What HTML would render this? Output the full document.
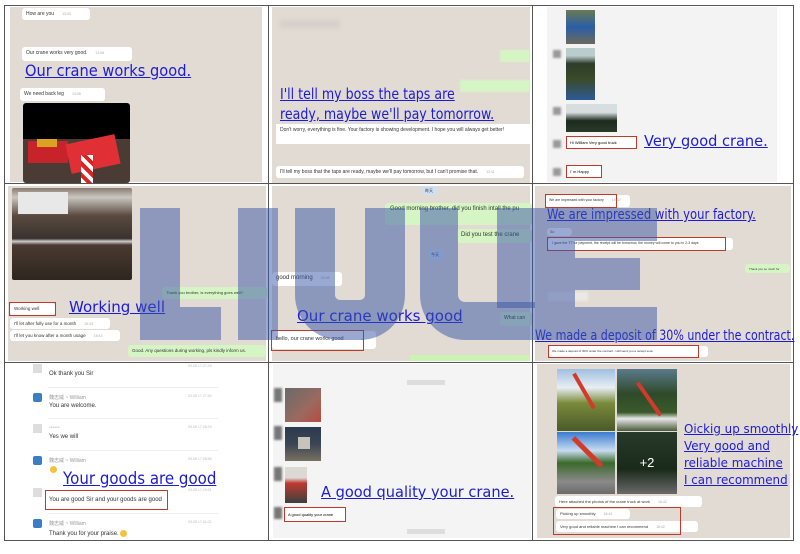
<!DOCTYPE html>
<html><head><meta charset="utf-8"><style>
*{margin:0;padding:0;box-sizing:border-box}
body{width:800px;height:554px;background:#fff;position:relative;overflow:hidden;font-family:"Liberation Sans","Noto Sans CJK SC",sans-serif}
.a{position:absolute}
.bg{background:#e2dbd3}
.b{position:absolute;background:#fff;border-radius:3px;font-size:5px;color:#333;padding:3px 4px;white-space:nowrap;overflow:hidden}
.g{background:#d6f5c4}
.r{position:absolute;border:1px solid #c0392b}
.big{position:absolute;color:#1c1cd6;text-decoration:underline;white-space:nowrap;font-family:"DejaVu Sans","Liberation Sans",sans-serif;transform-origin:0 0}
.t{font-size:3.5px;color:#aaa;margin-left:8px}
.line{position:absolute;background:#555}
.wm{position:absolute;background:rgba(55,85,165,0.5)}
.cn{font-size:6px;color:#333}
.nm{font-size:5px;color:#999}
.av{position:absolute;width:9px;height:9px;background:#ddd}
.avw{position:absolute;width:9px;height:9px;background:#3a7fc4;border-radius:2px}
.ts{position:absolute;font-size:3.5px;color:#bbb}
.hr{position:absolute;height:1px;background:#eee;left:48px;width:170px}
</style></head><body>
<div class="a bg" style="left:10px;top:7px;width:252px;height:175px"></div>
<div class="a bg" style="left:272px;top:7px;width:258px;height:176px"></div>
<div class="a" style="left:547px;top:7px;width:230px;height:175px;background:#f3f3f4"></div>
<div class="a bg" style="left:8px;top:186px;width:258px;height:175px"></div>
<div class="a bg" style="left:272px;top:186px;width:258px;height:175px"></div>
<div class="a bg" style="left:535px;top:186px;width:256px;height:175px"></div>
<div class="a" style="left:273px;top:364px;width:258px;height:174px;background:#f4f4f4"></div>
<div class="a bg" style="left:537px;top:364px;width:253px;height:174px"></div>

<div class="line" style="left:4px;top:5px;width:790px;height:1px"></div>
<div class="line" style="left:4px;top:183px;width:790px;height:1px"></div>
<div class="line" style="left:4px;top:362px;width:790px;height:1px"></div>
<div class="line" style="left:4px;top:540px;width:790px;height:1px"></div>
<div class="line" style="left:4px;top:5px;width:1px;height:536px"></div>
<div class="line" style="left:268px;top:5px;width:1px;height:536px"></div>
<div class="line" style="left:532px;top:5px;width:1px;height:536px"></div>
<div class="line" style="left:793px;top:5px;width:1px;height:536px"></div>

<!-- cell 1 -->
<div class="b" style="left:22px;top:8px;width:68px;height:12px">How are you<span class="t">13:00</span></div>
<div class="b" style="left:22px;top:47px;width:110px;height:14px">Our crane works very good.<span class="t">13:06</span></div>
<div class="big" style="left:25px;top:61px;font-size:16px;transform:scaleX(.914)">Our crane works good.</div>
<div class="b" style="left:20px;top:88px;width:85px;height:13px">We need back leg<span class="t">13:08</span></div>
<div class="a" style="left:23px;top:103px;width:107px;height:80px;background:linear-gradient(#000 0 45%,#4a3c34 45%);border-radius:3px;overflow:hidden">
<div class="a" style="left:5px;top:38px;width:40px;height:22px;background:#c8222a"></div>
<div class="a" style="left:45px;top:36px;width:50px;height:30px;background:#e03035;transform:rotate(-12deg)"></div>
<div class="a" style="left:58px;top:52px;width:12px;height:28px;background:repeating-linear-gradient(45deg,#fff 0 4px,#d22 4px 8px)"></div>
<div class="a" style="left:14px;top:36px;width:20px;height:8px;background:#d9a520"></div>
</div>

<!-- cell 2 -->
<div class="a" style="left:280px;top:20px;width:60px;height:8px;background:#d6cfca;filter:blur(2px)"></div>
<div class="a g" style="left:500px;top:50px;width:30px;height:12px;filter:blur(1px)"></div>
<div class="a g" style="left:460px;top:80px;width:70px;height:12px;filter:blur(1px)"></div>
<div class="big" style="left:280px;top:84px;font-size:15px;line-height:20px;transform:scaleX(.84)">I'll tell my boss the taps are<br>ready, maybe we'll pay tomorrow.</div>
<div class="a" style="left:276px;top:124px;width:254px;height:20px;background:#fff;font-size:5px;color:#333;padding:3px 4px;white-space:nowrap;overflow:hidden">Don't worry, everything is fine. Your factory is showing development. I hope you will always get better!</div>
<div class="b" style="left:276px;top:166px;width:248px;height:12px">I'll tell my boss that the taps are ready, maybe we'll pay tomorrow, but I can't promise that.<span class="t">12:11</span></div>

<!-- cell 3 -->
<div class="a" style="left:566px;top:10px;width:29px;height:34px;background:linear-gradient(#6a7a50,#2a5ea8 50%,#6c6a5a)"></div>
<div class="a" style="left:553px;top:50px;width:8px;height:8px;background:#999;filter:blur(1px)"></div>
<div class="a" style="left:566px;top:48px;width:29px;height:52px;background:linear-gradient(#bcc 0 15%,#2e3d2a 30%,#3a4a2a 60%,#2d5a96)"></div>
<div class="a" style="left:553px;top:107px;width:8px;height:8px;background:#999;filter:blur(1px)"></div>
<div class="a" style="left:566px;top:104px;width:51px;height:28px;background:linear-gradient(#d8dde0 0 30%,#1d2a1d 60%,#2a3a2a)"></div>
<div class="a" style="left:553px;top:140px;width:8px;height:8px;background:#999;filter:blur(1px)"></div>
<div class="r" style="left:566px;top:136px;width:71px;height:13px;font-size:4px;padding:3px;background:#fff;white-space:nowrap">Hi William Very good truck</div>
<div class="big" style="left:644px;top:132px;font-size:15.5px;transform:scaleX(.94)">Very good crane.</div>
<div class="a" style="left:553px;top:168px;width:8px;height:8px;background:#999;filter:blur(1px)"></div>
<div class="r" style="left:566px;top:165px;width:36px;height:13px;font-size:4px;padding:3px;background:#fff;white-space:nowrap">I' m Happy</div>

<!-- cell 4 -->
<div class="a" style="left:12px;top:188px;width:120px;height:92px;background:linear-gradient(#8a7a70 0,#c9c7c0 10%,#5a4a40 30%,#3a3230 55%,#cfcfcf 58%,#4a3a30 62%,#2e2620);border-radius:2px"></div>
<div class="a" style="left:18px;top:192px;width:50px;height:22px;background:#e8e8e8"></div>
<div class="b g" style="left:162px;top:287px;width:105px;height:12px;font-size:4px">Thank you brother, is everything goes well?</div>
<div class="b" style="left:10px;top:303px;width:45px;height:12px;font-size:4.5px">Working well</div>
<div class="r" style="left:9px;top:302px;width:47px;height:14px"></div>
<div class="big" style="left:69px;top:298px;font-size:15.5px;transform:scaleX(.97)">Working well</div>
<div class="b" style="left:10px;top:318px;width:100px;height:11px;font-size:4.5px">I'll let after fully use for a month<span class="t">15:43</span></div>
<div class="b" style="left:10px;top:330px;width:110px;height:11px;font-size:4.5px">I'll let you know after a month usage<span class="t">15:43</span></div>
<div class="b g" style="left:128px;top:345px;width:138px;height:12px;font-size:4.5px">Good. Any questions during working, pls kindly inform us.</div>

<!-- cell 5 -->
<div class="b" style="left:422px;top:186px;width:16px;height:9px;background:#cfe0f2;font-size:4px;padding:2px 3px">昨天</div>
<div class="b g" style="left:385px;top:203px;width:147px;height:22px;font-size:6px;padding:3px 5px">Good morning brother, did you finish intall the pu</div>
<div class="b g" style="left:457px;top:229px;width:75px;height:14px;font-size:6px">Did you test the crane</div>
<div class="b" style="left:428px;top:250px;width:16px;height:10px;background:#cfe0f2;font-size:4px;padding:2px 3px">今天</div>
<div class="b" style="left:272px;top:272px;width:70px;height:14px;font-size:6px">good morning<span class="t">09:48</span></div>
<div class="big" style="left:297px;top:307px;font-size:15px">Our crane works good</div>
<div class="b g" style="left:500px;top:312px;width:32px;height:14px;font-size:5px">What can</div>
<div class="b" style="left:272px;top:331px;width:104px;height:18px;font-size:5.5px;padding:5px 4px">hello, our crane works good<span style="margin-left:16px;color:#999">⌄</span></div>
<div class="r" style="left:271px;top:330px;width:93px;height:21px"></div>
<div class="a" style="left:410px;top:355px;width:120px;height:6px;background:#cdf3b4"></div>

<!-- cell 6 -->
<div class="b" style="left:545px;top:195px;width:85px;height:12px;font-size:3.5px">We are impressed with your factory<span class="t">19:02</span></div>
<div class="r" style="left:545px;top:194px;width:72px;height:14px"></div>
<div class="big" style="left:547px;top:207px;font-size:14.5px;transform:scaleX(.8)">We are impressed with your factory.</div>
<div class="b" style="left:547px;top:228px;width:25px;height:8px;font-size:3.5px;padding:2px 3px">So</div>
<div class="b" style="left:548px;top:238px;width:185px;height:12px;font-size:3.5px">I gave the TT for payment, the receipt will be tomorrow, the money will come to you in 2-3 days</div>
<div class="r" style="left:547px;top:237px;width:179px;height:14px"></div>
<div class="b g" style="left:745px;top:264px;width:45px;height:9px;font-size:3px">Thank you so much for</div>
<div class="a" style="left:548px;top:292px;width:40px;height:9px;background:#ece8e4;filter:blur(1px)"></div>
<div class="big" style="left:535px;top:328px;font-size:14px;transform:scaleX(.79)">We made a deposit of 30% under the contract.</div>
<div class="b" style="left:548px;top:346px;width:160px;height:11px;font-size:3px">We made a deposit of 30% under the contract. I will send you a receipt soon</div>
<div class="r" style="left:548px;top:345px;width:151px;height:13px"></div>

<!-- cell 7 -->
<div class="av" style="left:33px;top:364px"></div>
<div class="cn a" style="left:49px;top:371px">Ok thank you Sir</div>
<div class="ts" style="left:188px;top:364px">03-08 17:27:26</div>
<div class="hr" style="top:387px"></div>
<div class="avw" style="left:33px;top:393px"></div>
<div class="nm a" style="left:49px;top:394px">魏志威 ~ William</div>
<div class="ts" style="left:188px;top:394px">03-08 17:27:40</div>
<div class="cn a" style="left:49px;top:403px">You are welcome.</div>
<div class="hr" style="top:418px"></div>
<div class="av" style="left:33px;top:424px"></div>
<div class="nm a" style="left:49px;top:425px;color:#ccc">••••••</div>
<div class="ts" style="left:188px;top:425px">03-08 17:28:29</div>
<div class="cn a" style="left:49px;top:434px">Yes we will</div>
<div class="hr" style="top:450px"></div>
<div class="avw" style="left:33px;top:456px"></div>
<div class="nm a" style="left:49px;top:457px">魏志威 ~ William</div>
<div class="ts" style="left:188px;top:457px">03-08 17:28:56</div>
<div class="a" style="left:50px;top:466px;width:7px;height:7px;border-radius:50%;background:#f3c23a"></div>
<div class="big" style="left:63px;top:469px;font-size:16.5px;transform:scaleX(.91)">Your goods are good</div>
<div class="av" style="left:33px;top:488px"></div>
<div class="ts" style="left:188px;top:488px">03-08 17:29:51</div>
<div class="cn a" style="left:49px;top:497px">You are good Sir and your goods are good</div>
<div class="r" style="left:45px;top:490px;width:123px;height:20px"></div>
<div class="hr" style="top:513px"></div>
<div class="avw" style="left:33px;top:519px"></div>
<div class="nm a" style="left:49px;top:520px">魏志威 ~ William</div>
<div class="ts" style="left:188px;top:520px">03-08 17:31:02</div>
<div class="cn a" style="left:49px;top:530px">Thank you for your praise. <span style="display:inline-block;width:7px;height:7px;border-radius:50%;background:#f3c23a;vertical-align:middle"></span></div>

<!-- cell 8 -->
<div class="a" style="left:407px;top:380px;width:38px;height:5px;background:#ddd"></div>
<div class="a" style="left:274px;top:388px;width:8px;height:14px;background:#777;filter:blur(1px)"></div>
<div class="a" style="left:285px;top:388px;width:36px;height:34px;background:linear-gradient(135deg,#6a6a68,#9a6a60 60%,#b84a40)"></div>
<div class="a" style="left:274px;top:426px;width:8px;height:14px;background:#777;filter:blur(1px)"></div>
<div class="a" style="left:285px;top:427px;width:36px;height:34px;background:linear-gradient(#2c3a4e 0,#3a4656 50%,#7a7060)"><div class="a" style="left:13px;top:10px;width:12px;height:12px;background:#c8c4bc"></div></div>
<div class="a" style="left:274px;top:467px;width:8px;height:14px;background:#777;filter:blur(1px)"></div>
<div class="a" style="left:285px;top:467px;width:22px;height:36px;background:linear-gradient(#dcd8d4 0 30%,#c03a30 45%,#3a4040)"></div>
<div class="a" style="left:274px;top:507px;width:8px;height:12px;background:#777;filter:blur(1px)"></div>
<div class="a" style="left:284px;top:507px;width:62px;height:15px;background:#fff;border:1px solid #c0392b;font-size:4px;padding:4px 3px;white-space:nowrap">A good quality your crane</div>
<div class="big" style="left:321px;top:483px;font-size:15.5px;transform:scaleX(.94)">A good quality your crane.</div>
<div class="a" style="left:407px;top:529px;width:38px;height:5px;background:#ddd"></div>

<!-- cell 9 -->
<div class="a" style="left:557px;top:369px;width:58px;height:62px;background:linear-gradient(#9fbfe0 0,#e8eef4 30%,#7a8a3a 55%,#4a5a2a)"><div class="a" style="left:25px;top:2px;width:4px;height:40px;background:#d23a2a;transform:rotate(-30deg)"></div></div>
<div class="a" style="left:617px;top:369px;width:60px;height:62px;background:linear-gradient(#5a7a8a 0,#2f4a2a 40%,#3a5a2a 70%,#e8e8e8 80%,#4a5a3a)"><div class="a" style="left:30px;top:10px;width:4px;height:40px;background:#d23a2a;transform:rotate(-35deg)"></div></div>
<div class="a" style="left:557px;top:432px;width:58px;height:62px;background:linear-gradient(#3a7ad0 0,#c8dcf0 30%,#3a6a2a 50%,#8a8a8a 80%,#6a6a6a)"><div class="a" style="left:28px;top:0px;width:5px;height:40px;background:#d23a2a;transform:rotate(-45deg)"></div></div>
<div class="a" style="left:617px;top:432px;width:60px;height:62px;background:linear-gradient(#2a3a2a,#1a2a1a 60%,#6a6a6a);color:#fff;font-size:13px;text-align:center;line-height:62px">+2</div>
<div class="b" style="left:555px;top:496px;width:147px;height:11px;font-size:4px">Here attached the photos of the crane truck at work<span class="t">18:42</span></div>
<div class="b" style="left:556px;top:509px;width:74px;height:10px;font-size:4px;padding:2px 4px">Picking up smoothly<span class="t">18:42</span></div>
<div class="b" style="left:556px;top:521px;width:142px;height:11px;font-size:4px;padding:3px 4px">Very good and reliable machine I can recommend<span class="t">18:42</span></div>
<div class="r" style="left:553px;top:507px;width:128px;height:28px"></div>
<div class="big" style="left:684px;top:420px;font-size:12.5px;line-height:17px;transform:scaleX(.95)">Oickig up smoothly<br>Very good and<br>reliable machine<br>I can recommend</div>

<!-- watermark LIUUE -->
<div class="wm" style="left:140px;top:208px;width:40px;height:132px"></div>
<div class="wm" style="left:180px;top:307px;width:41px;height:33px"></div>
<div class="wm" style="left:238px;top:208px;width:40px;height:132px"></div>
<div class="a" style="left:295px;top:208px;width:110px;height:132px;border:40px solid rgba(55,85,165,0.5);border-top:none;border-radius:0 0 45px 45px"></div>
<div class="a" style="left:420px;top:208px;width:115px;height:132px;border:38px solid rgba(55,85,165,0.5);border-top:none;border-right:none;border-radius:0 0 0 45px"></div>
<div class="wm" style="left:497px;top:208px;width:38px;height:100px"></div>
<div class="wm" style="left:535px;top:208px;width:40px;height:132px"></div>
<div class="wm" style="left:575px;top:208px;width:82px;height:33px"></div>
<div class="wm" style="left:575px;top:258px;width:65px;height:32px"></div>
<div class="wm" style="left:575px;top:307px;width:82px;height:33px"></div>
</body></html>
